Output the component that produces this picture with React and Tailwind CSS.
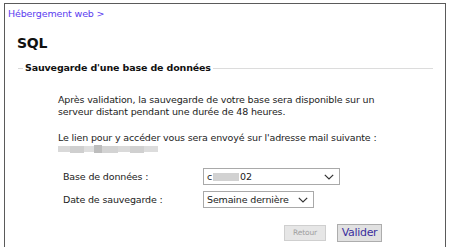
import React from "react";

function Chevron() {
  return (
    <svg width="10" height="6" viewBox="0 0 10 6" className="shrink-0">
      <path d="M0.8 0.8 L5 5 L9.2 0.8" fill="none" stroke="#333" strokeWidth="1.2" />
    </svg>
  );
}

export default function App() {
  return (
    <div className="w-[456px] h-[247px] overflow-hidden bg-white pt-[3px] pl-[4px] font-['DejaVu_Sans',sans-serif] text-[9.5px] tracking-[-0.15px] text-[#222]">
      <div className="w-[442px] h-[260px] border border-[#5a5a5a] border-b-0 bg-white">
        <div className="pl-[3px] pt-[3px] h-[18px] leading-[14px] text-[#5b3cf0]">Hébergement web &gt;</div>
        <div className="pl-[12px] pt-[12px] text-[14px] tracking-[-0.3px] font-bold leading-[18px] text-[#111]">SQL</div>
        <div className="mt-[10px] ml-[13px] mr-[12px] flex items-center">
          <div className="w-[5px] h-px bg-[#d8d8d8]" />
          <div className="px-[2px] font-bold leading-[12px] text-[#111]">Sauvegarde d'une base de données</div>
          <div className="flex-1 h-px bg-[#dcdcdc]" />
        </div>
        <div className="pl-[53px] pt-[20px] leading-[12px]">
          <p>Après validation, la sauvegarde de votre base sera disponible sur un<br />serveur distant pendant une durée de 48 heures.</p>
          <p className="mt-[14px]">Le lien pour y accéder vous sera envoyé sur l'adresse mail suivante :</p>
          <div className="mt-[1px] h-[8px] w-[100px] flex items-center">
            <div className="h-[6px] w-[12px] bg-[#d9d9d9]" />
            <div className="h-[7px] w-[14px] bg-[#cfcfcf]" />
            <div className="h-[6px] w-[10px] bg-[#dedede]" />
            <div className="h-[8px] w-[8px] bg-[#bdbdbd]" />
            <div className="h-[7px] w-[16px] bg-[#d3d3d3]" />
            <div className="h-[6px] w-[12px] bg-[#dadada]" />
            <div className="h-[7px] w-[14px] bg-[#d0d0d0]" />
            <div className="h-[6px] w-[14px] bg-[#dcdcdc]" />
          </div>
          <div className="mt-[15px] pl-[5px] flex flex-col gap-[6px]">
            <div className="flex items-center">
              <div className="w-[140px]">Base de données :</div>
              <div className="w-[137px] h-[17px] border border-[#a9a9a9] flex items-center justify-between pl-[3px] pr-[5px]">
                <span className="flex items-center">c<span className="inline-block w-[26px] h-[8px] bg-[#d2d2d2] mx-[1px]" />02</span>
                <Chevron />
              </div>
            </div>
            <div className="flex items-center">
              <div className="w-[140px]">Date de sauvegarde :</div>
              <div className="w-[111px] h-[17px] border border-[#a9a9a9] flex items-center justify-between pl-[3px] pr-[5px]">
                <span>Semaine dernière</span>
                <Chevron />
              </div>
            </div>
          </div>
        </div>
        <div className="flex justify-end gap-[11px] pr-[63px] mt-[16px] items-center">
          <button className="w-[42px] h-[16px] bg-[#e6e6e6] border border-[#cfcfcf] text-[7.5px] text-[#a0a0a0]">Retour</button>
          <button className="w-[45px] h-[18px] bg-[#e1e1e1] border border-[#adadad] text-[11px] tracking-[-0.3px] leading-[14px] text-[#3b2f9e]">Valider</button>
        </div>
      </div>
    </div>
  );
}
